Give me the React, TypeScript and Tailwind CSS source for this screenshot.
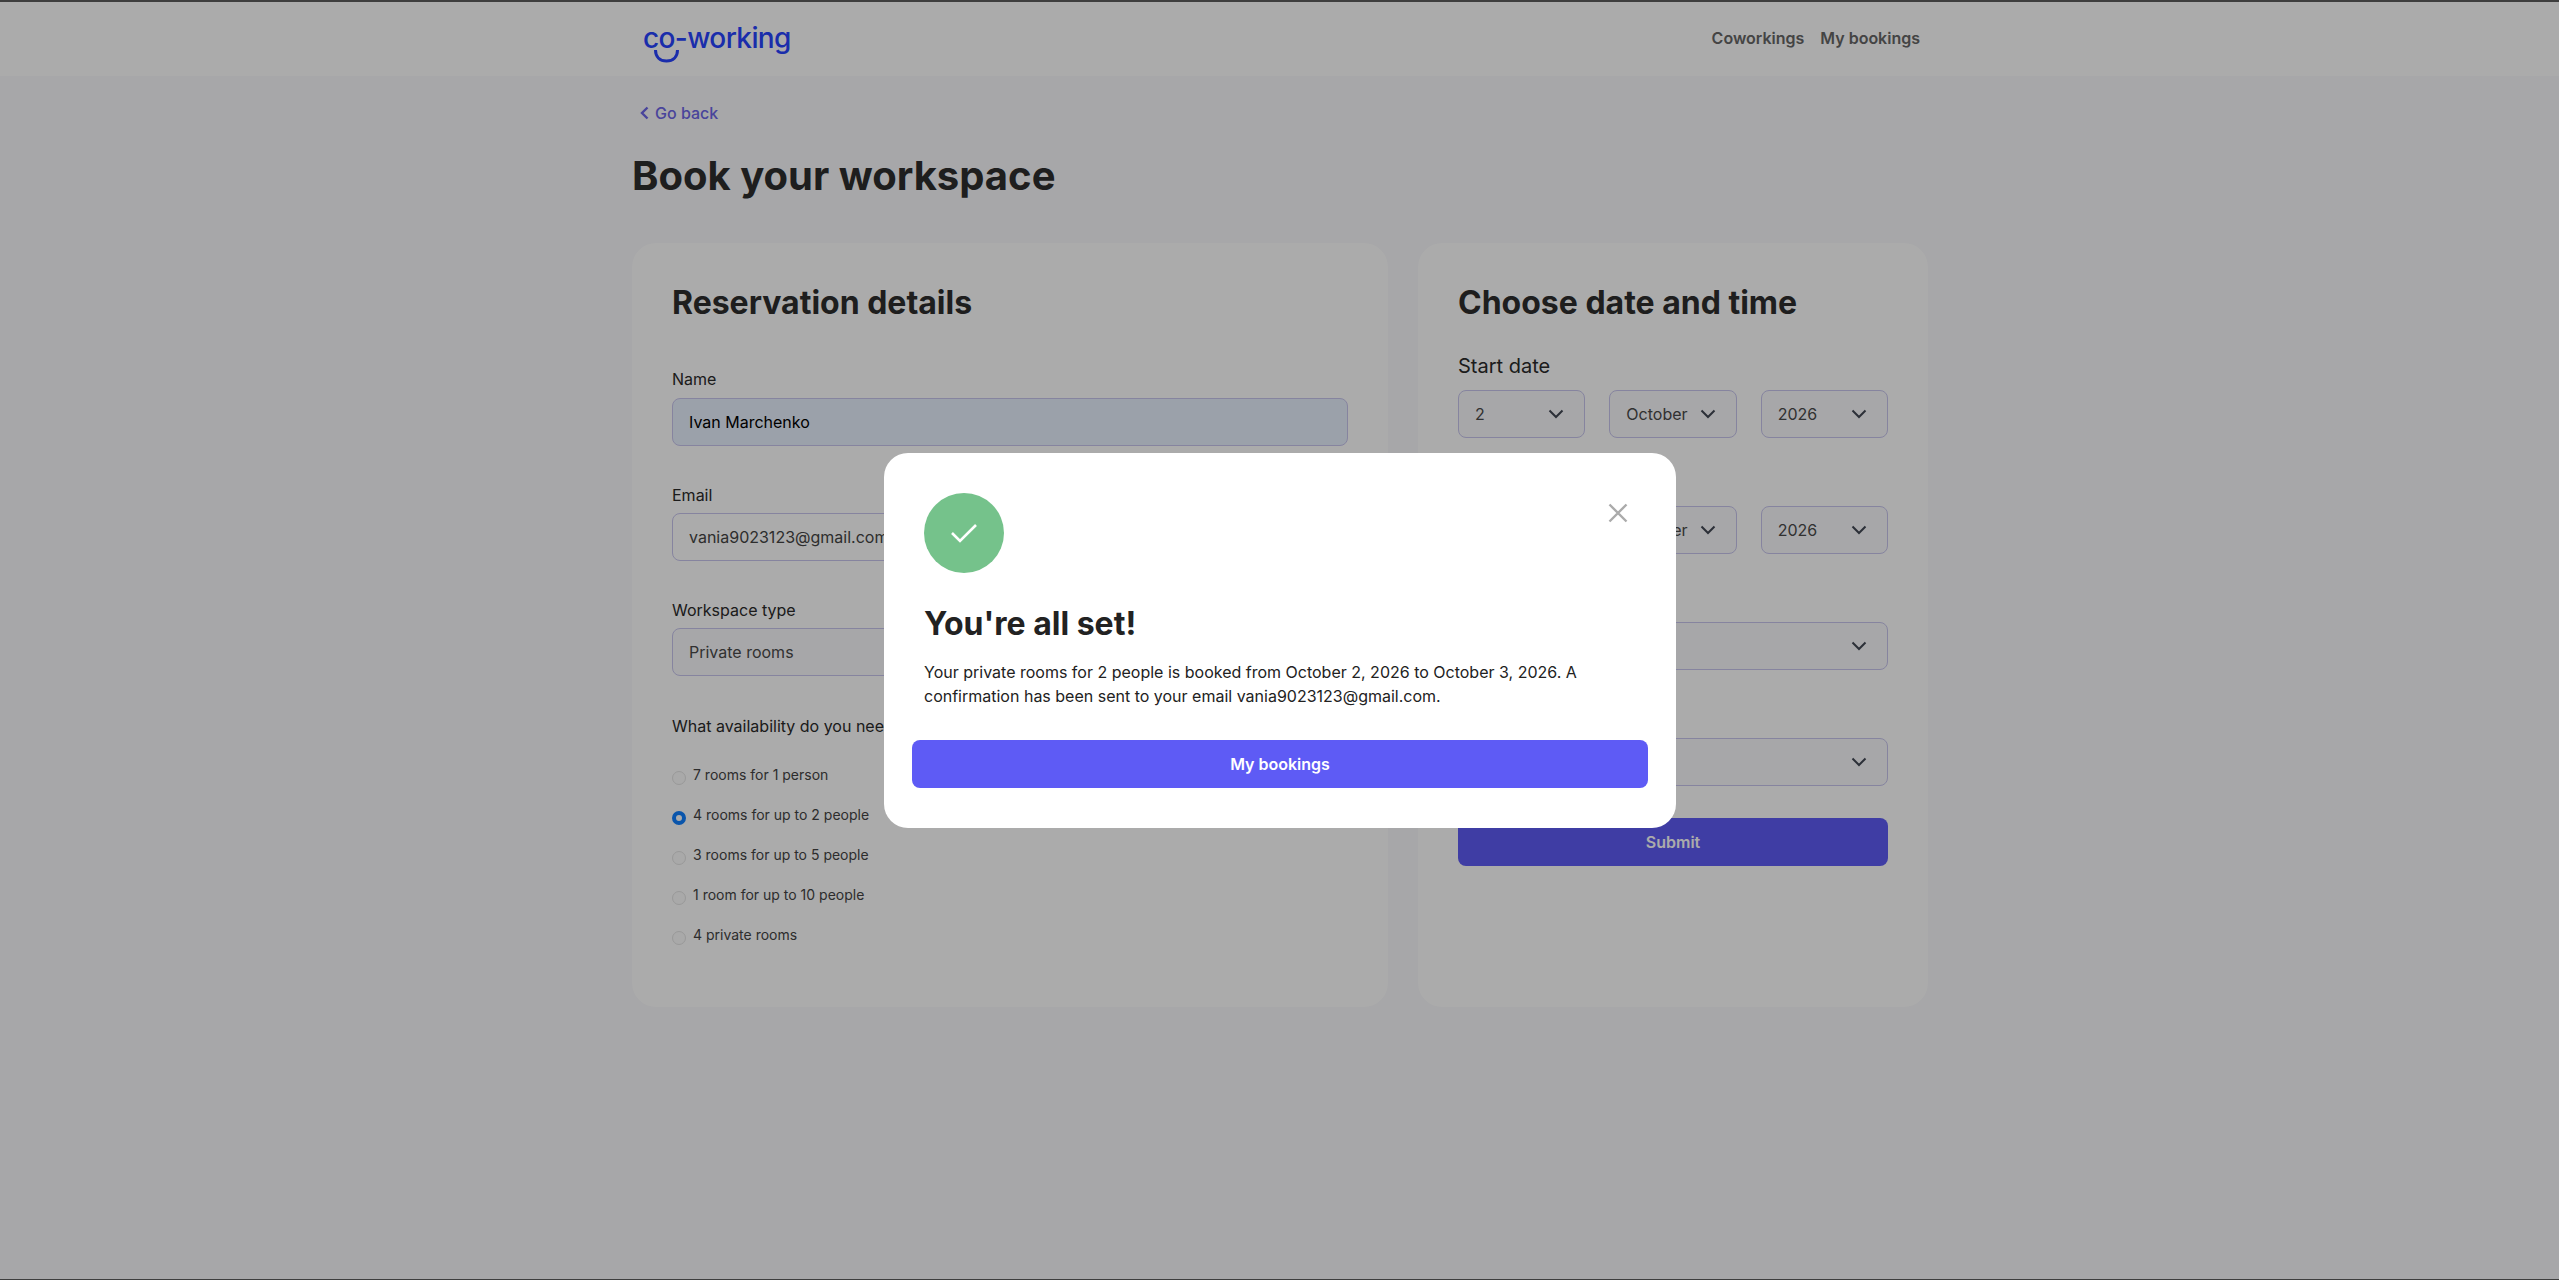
const Chevron = () => (
  <svg width="16" height="10" viewBox="0 0 16 10" fill="none" className="shrink-0">
    <path d="M1.5 1.5 8 8l6.5-6.5" stroke="#424854" strokeWidth="2" />
  </svg>
);

const Select = ({ value }: { value: string }) => (
  <div className="h-12 flex items-center justify-between pl-4 pr-5 rounded-lg border border-[#c8c5ee] bg-[#f9f9fc] text-base text-[#4a4a4a]">
    <span>{value}</span>
    <Chevron />
  </div>
);

const Label = ({ text, first }: { text: string; first?: boolean }) => (
  <div className={`text-base leading-6 text-[#2a2a2a] -mt-px ${first ? "mb-[7px]" : "mb-1.5"}`}>{text}</div>
);

const Field = ({ label, value, filled, first }: { label: string; value: string; filled?: boolean; first?: boolean }) => (
  <div className="mb-[38px]">
    <Label text={label} first={first} />
    <input
      readOnly
      defaultValue={value}
      className={`block w-full h-12 px-4 rounded-lg border border-[#c8c5ee] text-base outline-none ${filled ? "bg-[#e8f0fe] text-black" : "bg-white text-[#444]"}`}
    />
  </div>
);

const Radio = ({ label, checked }: { label: string; checked?: boolean }) => (
  <label className="flex items-start gap-[7px] h-10 text-sm leading-5 text-[#444]">
    <input
      type="radio"
      name="availability"
      defaultChecked={checked}
      className="appearance-none w-3.5 h-3.5 m-0 mt-[9px] shrink-0 rounded-full border border-[#e4e4e4] bg-[#fcfcfc] checked:border-4 checked:border-[#0f7fff] checked:bg-white"
    />
    <span className="mt-[3px]">{label}</span>
  </label>
);

const DateLabel = ({ text, className = "" }: { text: string; className?: string }) => (
  <div className={`text-xl leading-7 text-[#2a2a2a] mb-2.5 ${className}`}>{text}</div>
);

export default function App() {
  return (
    <div className="relative min-h-[1280px] bg-[#f9f9fc] font-['Inter',sans-serif]">
      <header className="h-[76px] bg-white pl-px">
        <div className="w-[1296px] mx-auto h-full flex items-start justify-between">
          <div className="relative ml-[11px] mt-4">
            <div className="text-[28px] leading-[44px] font-medium text-[#2843ff] tracking-[-0.6px]">co-working</div>
            <svg className="absolute left-[11px] top-[34px]" width="25" height="13" viewBox="0 0 25 13" fill="none">
              <path d="M1.5 0C1.5 7 6 11 12.5 11S23.5 7 23.5 0" stroke="#2843ff" strokeWidth="3" />
            </svg>
          </div>
          <nav className="flex gap-4 mt-[26px] mr-2 text-base leading-6 font-semibold text-[#666]">
            <span>Coworkings</span>
            <span>My bookings</span>
          </nav>
        </div>
      </header>

      <div className="pl-px">
        <main className="w-[1296px] mx-auto">
          <div className="flex items-center gap-[6px] pl-2 pt-[25px] text-base leading-6 font-medium text-[#6d66e8]">
            <svg width="9" height="14" viewBox="0 0 9 14" fill="none">
              <path d="M7.5 1.5 2 7l5.5 5.5" stroke="#6d66e8" strokeWidth="2.4" />
            </svg>
            <span>Go back</span>
          </div>
          <h1 className="mt-[25px] text-[40px] leading-[52px] font-bold text-[#2e2e2e]">Book your workspace</h1>

          <div className="flex gap-[30px] mt-[41px]">
            <section className="w-[756px] h-[764px] rounded-3xl bg-white px-10 pt-9">
              <h2 className="text-[32px] leading-[48px] font-bold text-[#2e2e2e] mb-[41px]">Reservation details</h2>
              <Field label="Name" value="Ivan Marchenko" filled first />
              <Field label="Email" value="vania9023123@gmail.com" />
              <div className="mb-[38px]">
                <Label text="Workspace type" />
                <Select value="Private rooms" />
              </div>
              <div className="text-base leading-6 text-[#2a2a2a] mb-6">What availability do you need?</div>
              <Radio label="7 rooms for 1 person" />
              <Radio label="4 rooms for up to 2 people" checked />
              <Radio label="3 rooms for up to 5 people" />
              <Radio label="1 room for up to 10 people" />
              <Radio label="4 private rooms" />
            </section>

            <section className="w-[510px] h-[764px] rounded-3xl bg-white px-10 pt-9">
              <h2 className="text-[32px] leading-[48px] font-bold text-[#2e2e2e] mb-[25px]">Choose date and time</h2>
              <DateLabel text="Start date" />
              <div className="grid grid-cols-3 gap-6">
                <Select value="2" />
                <Select value="October" />
                <Select value="2026" />
              </div>
              <DateLabel text="End date" className="mt-[30px]" />
              <div className="grid grid-cols-3 gap-6">
                <Select value="3" />
                <Select value="October" />
                <Select value="2026" />
              </div>
              <DateLabel text="Start time" className="mt-[30px]" />
              <Select value="09:00" />
              <DateLabel text="End time" className="mt-[30px]" />
              <Select value="18:00" />
              <button className="block w-full h-12 mt-8 rounded-lg bg-[#5e5bf5] text-base font-semibold text-white">Submit</button>
            </section>
          </div>
        </main>
      </div>

      <div className="absolute inset-0 bg-black/33 flex items-center justify-center pl-px">
        <div className="relative w-[792px] h-[375px] rounded-3xl bg-white pt-10 px-7">
          <svg className="absolute left-[724px] top-[50px]" width="20" height="20" viewBox="0 0 20 20" fill="none">
            <path d="M1.5 1.5l17 17M18.5 1.5l-17 17" stroke="#ababab" strokeWidth="2.4" />
          </svg>
          <div className="w-20 h-20 ml-3 rounded-full bg-[#75c28b] flex items-center justify-center">
            <svg width="28" height="20" viewBox="0 0 28 20" fill="none">
              <path d="M2 10l8 8L26 2" stroke="#fff" strokeWidth="2.6" />
            </svg>
          </div>
          <h2 className="ml-3 mt-[29px] text-[32px] leading-[44px] font-bold text-[#222]">You're all set!</h2>
          <p className="mx-3 mt-[14px] text-base leading-6 text-[#222]">
            Your private rooms for 2 people is booked from October 2, 2026 to October 3, 2026. A confirmation has been sent to your email vania9023123@gmail.com.
          </p>
          <button className="block w-full h-12 mt-8 rounded-lg bg-[#5e5bf5] text-base font-semibold text-white">My bookings</button>
        </div>
      </div>
      <div className="absolute top-0 inset-x-0 h-[2px] bg-[#3e3e3e]" />
      <div className="absolute bottom-0 inset-x-0 h-px bg-[#3e3e3e]" />
    </div>
  );
}
